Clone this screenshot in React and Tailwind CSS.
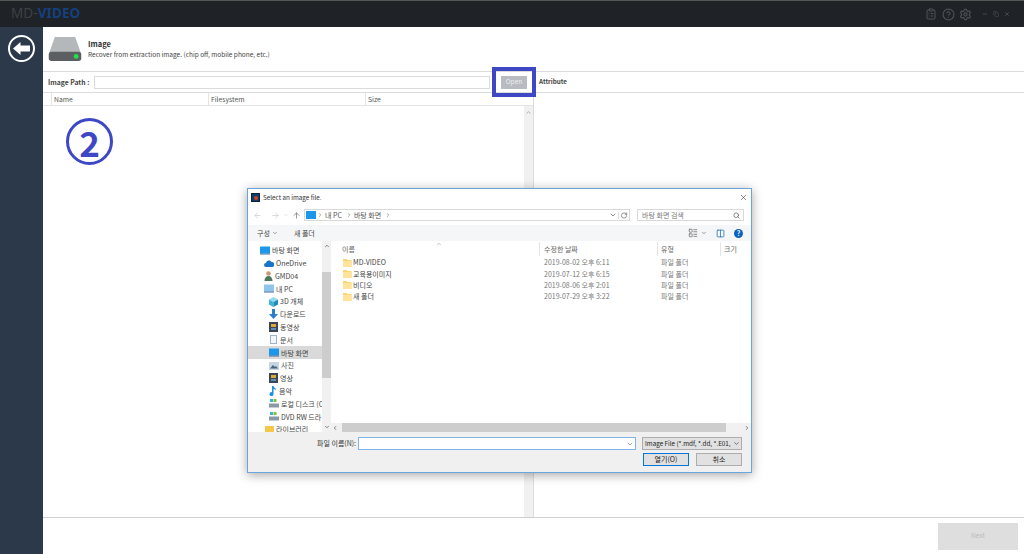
import { ArrowLeft, ArrowRight, ArrowUp, ChevronDown, ChevronUp, ChevronLeft, ChevronRight, RotateCw, Search, X, Minus, Copy, Settings, CircleHelp, ClipboardList, Columns2, LayoutList } from 'lucide-react';

const KR = { fontFamily: '"Noto Sans CJK KR", "Noto Sans", sans-serif' };

function Drive() {
  return (
    <svg width="34" height="26" viewBox="0 0 36 28">
      <path d="M7 1h22l6 17H1z" fill="#b5b8ba" />
      <rect x="0.5" y="17" width="35" height="10" rx="3" fill="#5c5f62" />
      <circle cx="30" cy="22" r="2.6" fill="#22e04a" />
    </svg>
  );
}

function BackArrow() {
  return (
    <svg width="17" height="13" viewBox="0 0 17 13">
      <path d="M0 6.500 7.500 0v3.500H17v6H7.500V13z" fill="#fff" />
    </svg>
  );
}

function Folder() {
  return (
    <svg width="9" height="9" viewBox="0 0 9 9" className="shrink-0">
      <path d="M0 1h3.500l1 1H8.500v7H0z" fill="#f9d675" />
      <path d="M0 3h8.500v6H0z" fill="#fde49a" />
    </svg>
  );
}

function NavIcon({ color, kind }) {
  if (kind === 'screen') {
    return (
      <svg width="10" height="9" viewBox="0 0 10 9" className="shrink-0">
        <rect x="0" y="0.500" width="10" height="7" fill={color} />
        <rect x="0" y="7.500" width="10" height="1" fill="#3c6f9c" />
      </svg>
    );
  }
  if (kind === 'cloud') {
    return (
      <svg width="10" height="7" viewBox="0 0 10 7" className="shrink-0">
        <path d="M2 7a2 2 0 0 1 0-4 3 3 0 0 1 5.500-1A2.500 2.500 0 0 1 8 7z" fill={color} />
      </svg>
    );
  }
  if (kind === 'user') {
    return (
      <svg width="9" height="10" viewBox="0 0 9 10" className="shrink-0">
        <circle cx="4.500" cy="2.500" r="2.300" fill="#c99a78" />
        <path d="M0.500 10c0-3 1.500-5 4-5s4 2 4 5z" fill="#4b7a5a" />
      </svg>
    );
  }
  if (kind === 'down') {
    return (
      <svg width="9" height="10" viewBox="0 0 9 10" className="shrink-0">
        <path d="M3 0h3v5h3L4.500 10 0 5h3z" fill={color} />
      </svg>
    );
  }
  if (kind === 'note') {
    return (
      <svg width="8" height="10" viewBox="0 0 8 10" className="shrink-0">
        <path d="M3 0h1.500c0 2 3 2 2.500 4C6 3 5 3 4.500 3v5a2 2 0 1 1-1.500-1.800z" fill={color} />
      </svg>
    );
  }
  if (kind === 'cube') {
    return (
      <svg width="9" height="10" viewBox="0 0 9 10" className="shrink-0">
        <path d="M4.500 0 9 2.500 4.500 5 0 2.500z" fill="#8fdcf0" />
        <path d="M0 2.500 4.500 5v5L0 7.500z" fill="#3cb4d8" />
        <path d="M9 2.500 4.500 5v5L9 7.500z" fill="#1d8db5" />
      </svg>
    );
  }
  if (kind === 'film') {
    return (
      <svg width="9" height="10" viewBox="0 0 9 10" className="shrink-0">
        <rect width="9" height="10" fill="#3c4654" />
        <rect x="2" y="2" width="5" height="3" fill="#d9a93c" />
        <rect x="2" y="6" width="5" height="2" fill="#5f8fb8" />
      </svg>
    );
  }
  if (kind === 'doc') {
    return <span className="w-[7px] h-[9px] mx-[1px] shrink-0 border border-[#9fb4c8] bg-[#f4f7fa]" />;
  }
  if (kind === 'photo') {
    return (
      <svg width="10" height="8" viewBox="0 0 10 8" className="shrink-0">
        <rect width="10" height="8" fill="#c6d5e2" />
        <path d="M1 6.500 4 3l2 2 1-1 2 2.500z" fill="#47627c" />
      </svg>
    );
  }
  if (kind === 'disk') {
    return (
      <svg width="10" height="9" viewBox="0 0 10 9" className="shrink-0">
        <rect x="1" y="0" width="3" height="3" fill="#3cb4d8" />
        <rect x="4.500" y="0" width="3" height="3" fill="#7fc241" />
        <rect x="0" y="4.500" width="10" height="4" fill="#8a9aa4" />
      </svg>
    );
  }
  return <span className="w-[9px] h-[8px] shrink-0" style={{ backgroundColor: color }} />;
}

const navItems = [
  { label: '바탕 화면', pad: 'pl-[12px]', kind: 'screen', color: '#1c97ea' },
  { label: 'OneDrive', pad: 'pl-[16px]', kind: 'cloud', color: '#1a74c8' },
  { label: 'GMD04', pad: 'pl-[16px]', kind: 'user', color: '#4b7a5a' },
  { label: '내 PC', pad: 'pl-[16px]', kind: 'screen', color: '#8fc4ec' },
  { label: '3D 개체', pad: 'pl-[21px]', kind: 'cube', color: '#3cb4d8' },
  { label: '다운로드', pad: 'pl-[21px]', kind: 'down', color: '#2b7fd0' },
  { label: '동영상', pad: 'pl-[21px]', kind: 'film', color: '#3c4654' },
  { label: '문서', pad: 'pl-[21px]', kind: 'doc', color: '#dfe7ee' },
  { label: '바탕 화면', pad: 'pl-[21px]', kind: 'screen', color: '#1c97ea', active: true },
  { label: '사진', pad: 'pl-[21px]', kind: 'photo', color: '#9db4c6' },
  { label: '영상', pad: 'pl-[21px]', kind: 'film', color: '#47627c' },
  { label: '음악', pad: 'pl-[21px]', kind: 'note', color: '#1c8fe0' },
  { label: '로컬 디스크 (C', pad: 'pl-[21px]', kind: 'disk', color: '#7ba0b0' },
  { label: 'DVD RW 드라', pad: 'pl-[21px]', kind: 'disk', color: '#a0a4a8' },
  { label: '라이브러리', pad: 'pl-[17px]', kind: 'box', color: '#f5c84c' },
];

const files = [
  ['MD-VIDEO', '2019-08-02 오후 6:11'],
  ['교육용이미지', '2019-07-12 오후 6:15'],
  ['비디오', '2019-08-06 오후 2:01'],
  ['새 폴더', '2019-07-29 오후 3:22'],
];

function FileDialog() {
  return (
    <div className="absolute left-[247px] top-[188px] w-[505px] h-[285px] bg-white border border-[#6aa6dc] shadow-[0_2px_10px_rgba(0,0,0,0.35)] flex flex-col text-[7px] text-[#444]" style={KR}>
      <div className="h-[17px] shrink-0 flex items-center pl-[3px] pr-[3px]">
        <span className="w-[9px] h-[9px] bg-[#0f3f66] border border-[#123] mr-[3px] flex items-center justify-center">
          <span className="w-[4px] h-[4px] rounded-full bg-[#c8452c]" />
        </span>
        <span className="text-[6.300px] text-[#333]">Select an image file.</span>
        <X size={9} strokeWidth={1.5} className="ml-auto text-[#333]" />
      </div>
      <div className="h-[18px] shrink-0 flex items-center pl-[2px] pr-[7px] text-[#888]">
        <ArrowLeft size={9} className="ml-[3px] text-[#ccc]" />
        <ArrowRight size={9} className="text-[#ccc] ml-[9px]" />
        <ChevronDown size={6} className="text-[#ccc] ml-[3px]" />
        <ArrowUp size={9} className="text-[#777] ml-[3px]" />
        <div className="ml-[3px] flex-1 h-[12px] border border-[#d9d9d9] flex items-center pl-[1px] text-[#555]">
          <span className="w-[10px] h-[8px] bg-[#1c97ea]" />
          <ChevronRight size={6} className="ml-[1px]" />
          <span className="ml-[2px]">내 PC</span>
          <ChevronRight size={6} className="ml-[4px]" />
          <span className="ml-[2px]">바탕 화면</span>
          <ChevronRight size={6} className="ml-[4px]" />
          <ChevronDown size={8} className="ml-auto mr-[1px]" />
          <RotateCw size={7} className="border-l border-[#ddd] w-[11px] text-[#555]" />
        </div>
        <div className="ml-[7px] w-[107px] h-[12px] border border-[#d9d9d9] flex items-center pl-[4px] pr-[3px] text-[#777]">
          <span>바탕 화면 검색</span>
          <Search size={7} className="ml-auto text-[#444]" />
        </div>
      </div>
      <div className="h-[16px] mt-[1px] shrink-0 bg-[#f5f6f7] flex items-center pl-[9px] pr-[8px] text-[#444]">
        <span>구성</span>
        <ChevronDown size={6} className="ml-[2px]" />
        <span className="ml-[16px]">새 폴더</span>
        <LayoutList size={10} className="ml-auto text-[#777]" />
        <ChevronDown size={6} className="ml-[3px]" />
        <Columns2 size={9} className="ml-[9px] text-[#1c6fb8]" />
        <span className="ml-[9px] w-[9px] h-[9px] rounded-full bg-[#0a63c0] text-white font-bold flex items-center justify-center text-[7px]">?</span>
      </div>
      <div className="flex flex-1 min-h-0">
        <div className="w-[74px] shrink-0 pt-[3px] overflow-hidden">
          <div className="flex flex-col">
            {navItems.map((item, i) => (
              <div key={i} className={`h-[12.800px] flex items-center gap-[2px] whitespace-nowrap overflow-hidden ${item.pad} ${item.active ? 'bg-[#d9d9d9]' : ''}`}>
                <NavIcon color={item.color} kind={item.kind} />
                <span>{item.label}</span>
              </div>
            ))}
          </div>
        </div>
        <div className="w-[9px] shrink-0 bg-[#f1f1f1] flex flex-col items-center">
          <ChevronUp size={6} strokeWidth={3} className="mt-[2px] shrink-0 text-[#555]" />
          <div className="w-full h-[106px] bg-[#cdcdcd] mt-[23px]" />
          <ChevronDown size={6} strokeWidth={3} className="mt-auto mb-[2px] shrink-0 text-[#555]" />
        </div>
        <div className="flex-1 min-w-0 flex flex-col">
          <div className="h-[14px] mt-[1px] shrink-0 flex items-center text-[#666] relative">
            <span className="w-[208px] pl-[11px]">이름</span>
            <span className="w-[118px] pl-[4px] border-l border-[#e5e5e5] h-full flex items-center">수정한 날짜</span>
            <span className="w-[63px] pl-[3px] border-l border-[#e5e5e5] h-full flex items-center">유형</span>
            <span className="pl-[3px] border-l border-[#e5e5e5] h-full flex items-center">크기</span>
            <ChevronUp size={6} className="absolute left-[105px] -top-[1px] text-[#888]" />
          </div>
          <div className="flex flex-col flex-1 pt-[1px]">
            {files.map(([name, date]) => (
              <div key={name} className="h-[11.200px] flex items-center">
                <div className="w-[208px] pl-[12px] flex items-center gap-[1px] text-[#444]">
                  <Folder />
                  <span>{name}</span>
                </div>
                <span className="w-[118px] pl-[5px] text-[#777]">{date}</span>
                <span className="pl-[4px] text-[#777]">파일 폴더</span>
              </div>
            ))}
          </div>
          <div className="h-[9px] shrink-0 bg-[#f1f1f1] flex items-center">
            <ChevronLeft size={6} strokeWidth={3} className="ml-[1px] mr-[4px] text-[#555]" />
            <div className="w-[384px] h-full bg-[#cdcdcd]" />
            <ChevronRight size={6} strokeWidth={3} className="ml-auto mr-[1px] text-[#555]" />
          </div>
        </div>
      </div>
      <div className="h-[40px] shrink-0 bg-[#f0f0f0] flex flex-col pr-[9px]">
        <div className="h-[13px] mt-[5px] flex items-center">
          <span className="ml-[69px] w-[41px] text-[#333] whitespace-nowrap">파일 이름(N):</span>
          <div className="w-[278px] h-[13px] bg-white border border-[#7eb4ea] flex items-center justify-end pr-[1px]">
            <ChevronDown size={8} className="text-[#777]" />
          </div>
          <div className="ml-[6px] flex-1 h-[13px] bg-[#e1e1e1] border border-[#adadad] flex items-center pl-[2px] pr-[1px] text-[6.300px] text-[#222] whitespace-nowrap overflow-hidden">
            <span>Image File (*.mdf, *.dd, *.E01,</span>
            <ChevronDown size={7} className="ml-auto shrink-0" />
          </div>
        </div>
        <div className="flex justify-end gap-[7px] mt-[3px]">
          <div className="w-[46px] h-[13px] bg-[#e1e1e1] border-[1.500px] border-[#0078d7] flex items-center justify-center text-[#222]">열기(O)</div>
          <div className="w-[46px] h-[13px] bg-[#e1e1e1] border border-[#adadad] flex items-center justify-center text-[#222]">취소</div>
        </div>
      </div>
    </div>
  );
}

export default function App() {
  return (
    <div className="relative w-[1024px] h-[554px] overflow-hidden bg-white flex flex-col" style={KR}>
      <header className="h-[27px] shrink-0 bg-[#1f2227] border-t border-[#555] flex items-center pl-[11px] pr-[14px]">
        <span className="text-[13.500px] leading-none tracking-[0.1px] text-[#3d4146]" style={{ fontFamily: '"Noto Sans", sans-serif' }}>MD-<span className="font-bold text-[#15407c]">VIDEO</span></span>
        <div className="ml-auto flex items-center text-[#50545a]">
          <ClipboardList size={12} />
          <CircleHelp size={13} className="ml-[5px]" />
          <Settings size={13} className="ml-[4px]" />
          <Minus size={6} strokeWidth={3} className="ml-[10px]" />
          <Copy size={6} className="ml-[5px]" />
          <X size={6} strokeWidth={3} className="ml-[5px]" />
        </div>
      </header>
      <div className="flex flex-1 min-h-0">
        <aside className="w-[43px] shrink-0 bg-[#2b394b] flex justify-center pt-[8px]">
          <div className="w-[27px] h-[27px] rounded-full border-2 border-white flex items-center justify-center">
            <BackArrow />
          </div>
        </aside>
        <main className="flex-1 min-w-0 flex flex-col">
          <div className="h-[45px] shrink-0 border-b border-[#dcdcdc] flex items-center pl-[5px]">
            <Drive />
            <div className="ml-[6px] -mt-[1px]">
              <div className="text-[7.500px] font-bold text-[#333] leading-[11px]">Image</div>
              <div className="text-[6.500px] text-[#444] leading-[10px]">Recover from extraction image. (chip off, mobile phone, etc.)</div>
            </div>
          </div>
          <div className="flex flex-1 min-h-0">
            <div className="w-[491px] shrink-0 border-r border-[#dcdcdc] flex flex-col">
              <div className="h-[21px] shrink-0 border-b border-[#dcdcdc] flex items-center pl-[5px]">
                <span className="w-[46px] text-[6.800px] font-bold text-[#444] whitespace-nowrap">Image Path :</span>
                <div className="w-[396px] h-[13px] border border-[#dcdcdc]" />
                <div className="ml-[11px] w-[26px] h-[13px] bg-[#b8bcc2] flex items-center justify-center text-[6.500px] text-[#eee]">Open</div>
              </div>
              <div className="h-[13px] shrink-0 border-b border-[#e4e4e4] flex text-[6.800px] text-[#555]">
                <span className="w-[9px] border-r border-[#e4e4e4]" />
                <span className="w-[157px] pl-[2px] border-r border-[#e4e4e4] flex items-center">Name</span>
                <span className="w-[157px] pl-[2px] border-r border-[#e4e4e4] flex items-center">Filesystem</span>
                <span className="pl-[2px] flex items-center">Size</span>
              </div>
              <div className="flex-1 flex justify-end">
                <div className="w-[9px] bg-[#f1f1f1] flex justify-center pt-[3px]">
                  <ChevronUp size={7} strokeWidth={2.500} className="text-[#999]" />
                </div>
              </div>
            </div>
            <div className="flex-1 flex flex-col">
              <div className="h-[21px] shrink-0 border-b border-[#dcdcdc] flex items-center pl-[5px] text-[6.300px] font-bold text-[#444]">Attribute</div>
            </div>
          </div>
          <div className="h-[37px] shrink-0 border-t border-[#d0d0d0] flex items-center justify-end pr-[6px]">
            <div className="w-[80px] h-[27px] bg-[#dedede] flex items-center justify-center text-[6.500px] text-[#bbb]">Next</div>
          </div>
        </main>
      </div>
      {/* annotations from the manual, sit on top of the app */}
      <div className="absolute left-[492px] top-[67px] w-[44px] h-[30px] border-[4px] border-[#3f48c4]" />
      <div className="absolute left-[66px] top-[118px] w-[47px] h-[47px] rounded-full border-[3px] border-[#3f48c4] flex items-center justify-center text-[35px] font-bold text-[#3f48c4] leading-none">2</div>
      <FileDialog />
    </div>
  );
}
